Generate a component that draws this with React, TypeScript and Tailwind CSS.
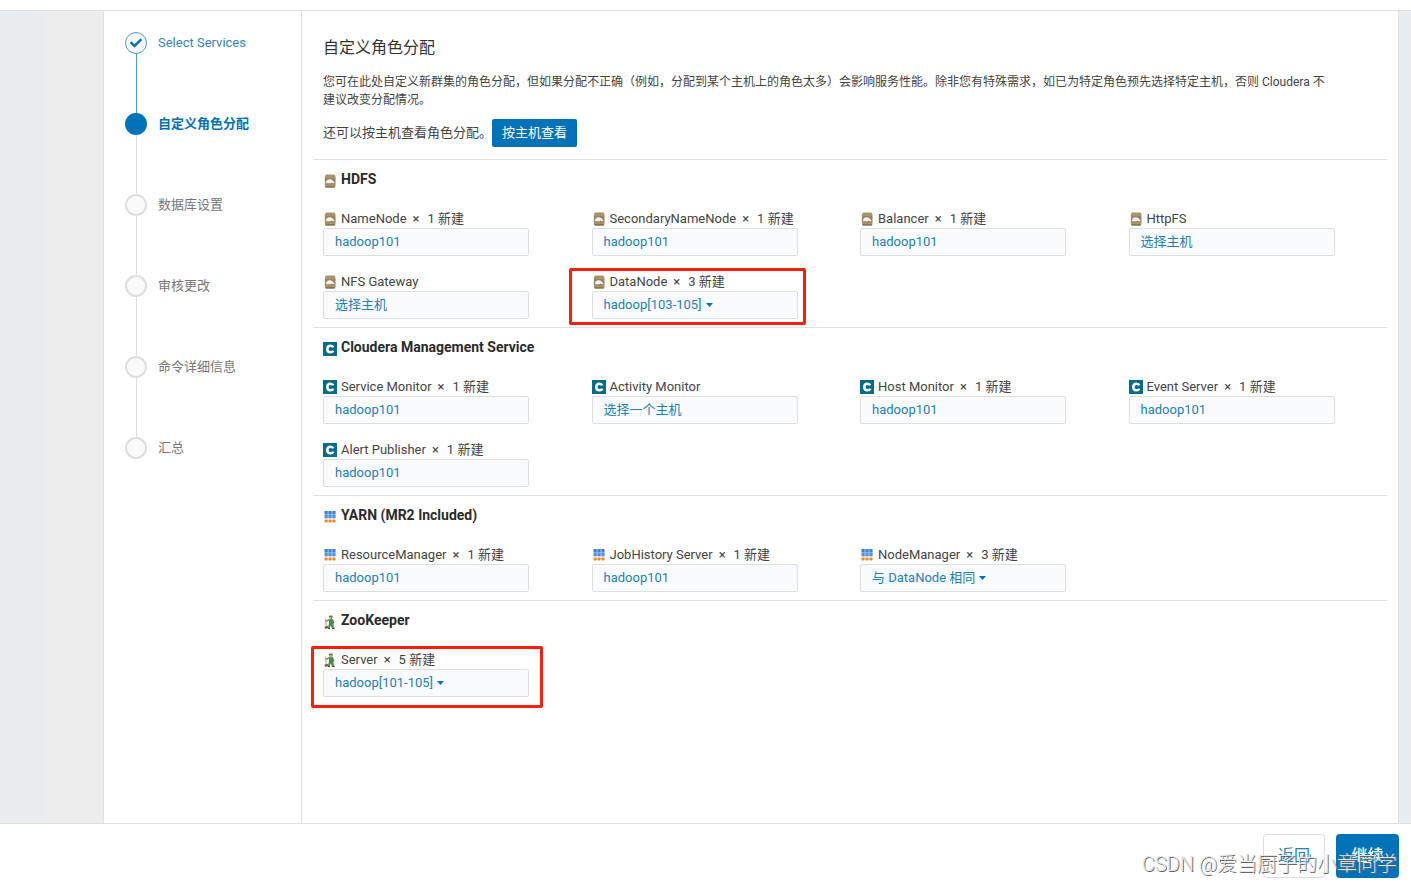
import React from 'react'
import { FaCheck } from 'react-icons/fa'

type ServiceType = 'hdfs' | 'cloudera' | 'yarn' | 'zookeeper'

interface Role {
	name: string
	count?: number
	host: string
	caret?: boolean
	highlight?: string
}

interface Service {
	type: ServiceType
	name: string
	roles: Role[]
}

const steps = [
	{ label: 'Select Services', state: 'done' },
	{ label: '自定义角色分配', state: 'active' },
	{ label: '数据库设置', state: 'todo' },
	{ label: '审核更改', state: 'todo' },
	{ label: '命令详细信息', state: 'todo' },
	{ label: '汇总', state: 'todo' },
]

const services: Service[] = [
	{
		type: 'hdfs',
		name: 'HDFS',
		roles: [
			{ name: 'NameNode', count: 1, host: 'hadoop101' },
			{ name: 'SecondaryNameNode', count: 1, host: 'hadoop101' },
			{ name: 'Balancer', count: 1, host: 'hadoop101' },
			{ name: 'HttpFS', host: '选择主机' },
			{ name: 'NFS Gateway', host: '选择主机' },
			{
				name: 'DataNode',
				count: 3,
				host: 'hadoop[103-105]',
				caret: true,
				highlight: '-left-[23px] -right-2 -top-[5px] -bottom-1.5',
			},
		],
	},
	{
		type: 'cloudera',
		name: 'Cloudera Management Service',
		roles: [
			{ name: 'Service Monitor', count: 1, host: 'hadoop101' },
			{ name: 'Activity Monitor', host: '选择一个主机' },
			{ name: 'Host Monitor', count: 1, host: 'hadoop101' },
			{ name: 'Event Server', count: 1, host: 'hadoop101' },
			{ name: 'Alert Publisher', count: 1, host: 'hadoop101' },
		],
	},
	{
		type: 'yarn',
		name: 'YARN (MR2 Included)',
		roles: [
			{ name: 'ResourceManager', count: 1, host: 'hadoop101' },
			{ name: 'JobHistory Server', count: 1, host: 'hadoop101' },
			{ name: 'NodeManager', count: 3, host: '与 DataNode 相同', caret: true },
		],
	},
	{
		type: 'zookeeper',
		name: 'ZooKeeper',
		roles: [
			{
				name: 'Server',
				count: 5,
				host: 'hadoop[101-105]',
				caret: true,
				highlight: '-left-3 -right-3.5 -top-[5px] -bottom-[11px]',
			},
		],
	},
]

const ServiceIcon: React.FC<{ type: ServiceType }> = ({ type }) => {
	if (type === 'cloudera') {
		return (
			<svg className="h-3.5 w-3.5 shrink-0" viewBox="0 0 14 14" aria-hidden="true">
				<rect width="14" height="14" fill="#056b8a" />
				<path
					d="M10.200 5.400C9.800 4.200 8.800 3.700 7.400 3.700C5.400 3.700 4.300 5 4.300 7C4.300 9 5.400 10.300 7.400 10.300C8.800 10.300 9.800 9.800 10.200 8.600"
					fill="none"
					stroke="#fff"
					strokeWidth="2.500"
				/>
			</svg>
		)
	}
	if (type === 'yarn') {
		return (
			<svg className="h-3.5 w-3.5 shrink-0" viewBox="0 0 14 14" aria-hidden="true">
				<rect x="1.500" y="1" width="11" height="7.500" fill="#bcd5f2" />
				{[1.6, 5.5, 9.4].map((x) => (
					<g key={x}>
						<rect x={x} y="1" width="3.100" height="3" fill="#3f83d6" />
						<rect x={x} y="4.400" width="3.100" height="3.800" fill="#5592df" />
						<rect x={x} y="9.400" width="3.100" height="3.200" rx=".8" fill="#f08a24" />
					</g>
				))}
			</svg>
		)
	}
	if (type === 'zookeeper') {
		return (
			<svg className="h-3.5 w-3.5 shrink-0" viewBox="0 0 14 14" aria-hidden="true">
				<path d="M2.200 3.500L3.500 12.500" stroke="#b39c88" strokeWidth=".9" />
				<path d="M1.500 11.500L4.800 11L5.300 13.300L2 13.700Z" fill="#7b5744" />
				<path d="M6 4.300L9.800 4L11.400 7.500L10.400 9L10.900 12.800H8.500L8 10.200L6.800 12.800H4.900L6 8.500Z" fill="#4d8b4a" />
				<path d="M6.500 4.700L3 6.300" stroke="#77906b" strokeWidth="1.500" />
				<circle cx="8" cy="2.600" r="1.700" fill="#bd987a" />
				<path d="M5.800 1.900C6.100 .2 9.600 0 10 1.800Z" fill="#536b45" />
				<path d="M5 13.300h2M9 13.300h2.600" stroke="#493a31" strokeWidth="1.300" />
			</svg>
		)
	}
	return (
		<svg className="h-3.5 w-3.5 shrink-0" viewBox="0 0 14 14" aria-hidden="true">
			<path d="M3 .6H11.400Q12.600 2 12.600 3.500V11Q12.600 12.500 11.600 13.700H2.800Q1.800 12.500 1.800 11V3.500Q1.800 2 3 .6Z" fill="#a99368" />
			<path d="M2.500 12.800h9.400" stroke="#7e6a48" strokeWidth="1" />
			<rect x="2.600" y="4.200" width="9.200" height="6" fill="#8f8268" />
			<path d="M3 8.600C3.300 5.600 6 4.700 8 5.600C9.600 6.300 11 7.400 11.500 9.300H9.700L8.800 8.500L7.600 9.300H3Z" fill="#f5f3f0" />
		</svg>
	)
}

const Stepper: React.FC = () => (
	<ol className="w-[198px] shrink-0 border-r border-[#e0e0e0] pl-[21px] pt-[21px]">
		{steps.map((step, index) => (
			<li key={step.label} className="flex gap-[11px]">
				<div className="flex flex-col items-center">
					{step.state === 'done' && (
						<span className="flex h-[22px] w-[22px] items-center justify-center rounded-full border border-[#4f9dcc] bg-[#f6f9fd]">
							<FaCheck className="h-3 w-3 text-[#0072b8]" />
						</span>
					)}
					{step.state === 'active' && (
						<span className="h-[22px] w-[22px] rounded-full bg-[#0072b8]" />
					)}
					{step.state === 'todo' && (
						<span className="h-[22px] w-[22px] rounded-full border-2 border-[#dedede] bg-[#fafafa]" />
					)}
					{index < steps.length - 1 && (
						<span
							className={`h-[59px] w-px ${
								step.state === 'done' ? 'bg-[#4f9dcc]' : 'bg-[#dedede]'
							}`}
						/>
					)}
				</div>
				{step.state === 'done' ? (
					<a href="#services" className="h-[22px] leading-[22px] text-[#3a84b4]">
						{step.label}
					</a>
				) : (
					<span
						className={`h-[22px] leading-[22px] ${
							step.state === 'active' ? 'font-bold text-[#0072b8]' : 'text-[#777]'
						}`}
					>
						{step.label}
					</span>
				)}
			</li>
		))}
	</ol>
)

const RoleCell: React.FC<{ role: Role; type: ServiceType }> = ({ role, type }) => (
	<div className="pl-[10px]">
		<div className="relative w-[206px]">
			<div className="flex h-[18px] items-center gap-1 whitespace-nowrap leading-[18px] text-[#444]">
				<ServiceIcon type={type} />
				<span>{role.name}</span>
				{role.count && (
					<>
						<span className="ml-0.5">×</span>
						<span className="ml-1">{role.count} 新建</span>
					</>
				)}
			</div>
			<button
				type="button"
				aria-label={`${role.name} ${role.host}`}
				className="flex h-7 w-full items-center gap-1 rounded-xs border border-[#dedede] bg-[#fafbfc] px-[11px] leading-[18px] text-[#2380b6]"
			>
				<span>{role.host}</span>
				{role.caret && (
					<svg className="h-1 w-[7px]" viewBox="0 0 7 4" aria-hidden="true">
						<path d="M0 0H7L3.500 4Z" fill="#0072b8" />
					</svg>
				)}
			</button>
			{role.highlight && (
				<div
					className={`pointer-events-none absolute rounded-xs border-3 border-[#fb1d10] ${role.highlight}`}
				/>
			)}
		</div>
	</div>
)

const ServiceSection: React.FC<{ service: Service }> = ({ service }) => (
	<section className="border-t border-[#e0e0e0] pb-2">
		<h2 className="flex h-[38px] items-center gap-1 pl-[10px] text-sm font-bold text-[#2b2b2b]">
			<span className="pt-1">
				<ServiceIcon type={service.type} />
			</span>
			{service.name}
		</h2>
		<div className="mt-3 grid grid-cols-4 gap-y-[17px]">
			{service.roles.map((role) => (
				<RoleCell key={role.name} role={role} type={service.type} />
			))}
		</div>
	</section>
)

const App: React.FC = () => {
	return (
		<div className="flex min-h-screen flex-col bg-white pt-[10px] font-[Roboto,'Noto_Sans_CJK_SC',sans-serif] text-[13px]">
			<div className="flex flex-1 border-y border-[#e0e0e0] bg-[#e9edf0] pr-3">
				<div className="flex w-[103px] shrink-0">
					<div className="w-[45px]" />
					<div className="flex-1 bg-[#ededed]" />
				</div>
				<div className="flex min-w-0 flex-1 border-x border-[#e0e0e0] bg-white">
					<Stepper />
					<main className="min-w-0 flex-1 px-[11px] pt-6">
						<div className="px-[10px] pb-3 text-[#444]">
							<h1 className="text-base leading-[26px] text-[#333]">自定义角色分配</h1>
							<p className="mt-3 text-xs leading-[18px]">
								您可在此处自定义新群集的角色分配，但如果分配不正确（例如，分配到某个主机上的角色太多）会影响服务性能。除非您有特殊需求，如已为特定角色预先选择特定主机，否则 Cloudera 不
								<br />
								建议改变分配情况。
							</p>
							<div className="mt-[10px] flex items-center">
								<span>还可以按主机查看角色分配。</span>
								<button
									type="button"
									className="h-7 rounded-xs bg-[#0072b8] px-[10px] text-white"
								>
									按主机查看
								</button>
							</div>
						</div>
						{services.map((service) => (
							<ServiceSection key={service.type} service={service} />
						))}
					</main>
				</div>
			</div>
			<footer className="relative flex h-[58px] items-start justify-end gap-[11px] pr-3 pt-[10px]">
				<button
					type="button"
					className="h-11 w-[62px] rounded-sm border border-[#dcdcdc] bg-white text-base leading-10 text-[#2380b6]"
				>
					返回
				</button>
				<button
					type="button"
					className="h-11 w-[63px] rounded-sm bg-[#0072b8] text-base font-medium leading-10 text-white"
				>
					继续
				</button>
				<span className="pointer-events-none absolute bottom-0.5 right-3.5 whitespace-nowrap text-xl font-light leading-8 text-[#e6e6e6] [text-shadow:1px_1px_0_#666]">
					CSDN @爱当厨子的小章同学
				</span>
			</footer>
		</div>
	)
}

export default App
